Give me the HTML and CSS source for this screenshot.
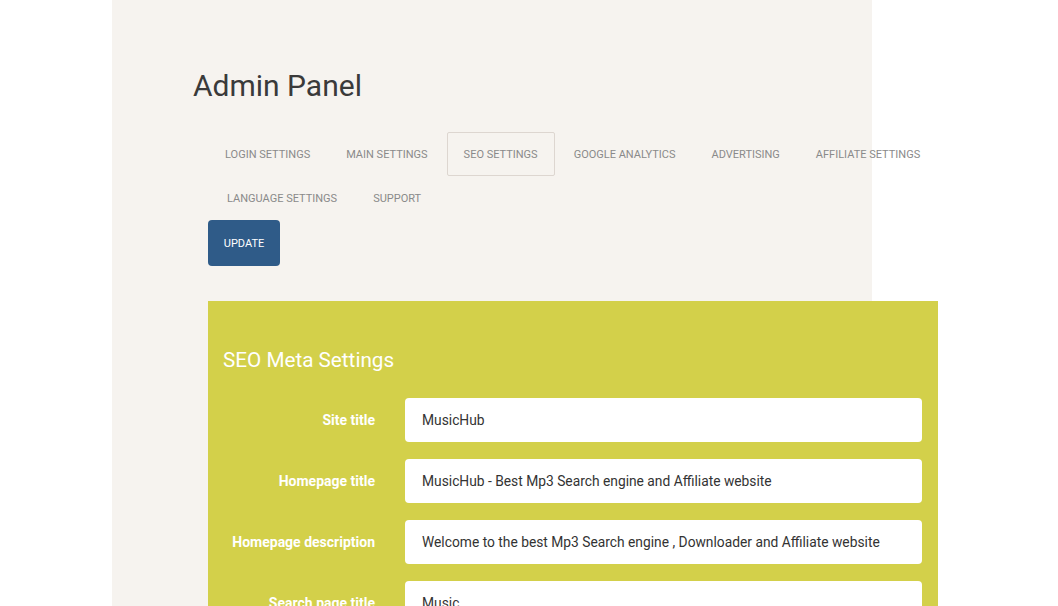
FILE: index.html
```html
<!DOCTYPE html>
<html>
<head>
<meta charset="utf-8">
<link rel="stylesheet" href="styles.css">
</head>
<body>
<div class="page">
  <div class="content">
    <h1 class="title">Admin Panel</h1>
    <ul class="tabs">
      <li class="tab">Login Settings</li>
      <li class="tab">Main Settings</li>
      <li class="tab active">SEO Settings</li>
      <li class="tab">Google Analytics</li>
      <li class="tab">Advertising</li>
      <li class="tab">Affiliate Settings</li>
      <li class="tab second">Language Settings</li>
      <li class="tab">Support</li>
    </ul>
    <button class="btn-update">Update</button>
    <div class="panel">
      <h3 class="panel-title">SEO Meta Settings</h3>
      <div class="form">
        <label class="label">Site title</label>
        <div class="input">MusicHub</div>
        <label class="label">Homepage title</label>
        <div class="input">MusicHub - Best Mp3 Search engine and Affiliate website</div>
        <label class="label">Homepage description</label>
        <div class="input">Welcome to the best Mp3 Search engine , Downloader and Affiliate website</div>
        <label class="label">Search page title</label>
        <div class="input">Music</div>
      </div>
    </div>
  </div>
</div>
</body>
</html>
```
FILE: styles.css
```css
html, body {
  margin: 0;
  padding: 0;
  background: #ffffff;
  font-family: Roboto, "Liberation Sans", sans-serif;
  overflow: hidden;
}
.page {
  margin-left: 112px;
  width: 760px;
  min-height: 606px;
  background: #f6f3ef;
  padding-left: 96px;
  box-sizing: border-box;
  padding-top: 1px;
}
.content {
  width: 730px;
}
.title {
  margin: 66px 0 0 -15px;
  font-size: 30px;
  font-weight: 400;
  color: #3a3a3a;
  line-height: 38px;
}
.tabs {
  list-style: none;
  margin: 27px 0 0 0;
  padding: 0;
  width: 745px;
  display: flex;
  flex-wrap: wrap;
}
.tab {
  height: 44px;
  box-sizing: border-box;
  padding: 0 16px;
  margin-right: 2px;
  display: flex;
  align-items: center;
  font-size: 11px;
  text-transform: uppercase;
  color: #8a8a8a;
  border: 1px solid transparent;
  border-radius: 2px;
}
.tab.active {
  border-color: #ddd6d0;
}
.tab.second {
  margin-left: 2px;
}
.btn-update {
  display: block;
  width: 72px;
  height: 46px;
  border: none;
  border-radius: 4px;
  background: #2f5b88;
  color: #ffffff;
  font-family: Roboto, "Liberation Sans", sans-serif;
  font-size: 11px;
  text-transform: uppercase;
  padding: 0;
}
.panel {
  margin-top: 35px;
  background: #d3d04a;
  padding: 44px 16px 20px 15px;
}
.panel-title {
  margin: 0 0 23px 0;
  font-size: 20.7px;
  font-weight: 400;
  color: #ffffff;
  line-height: 30px;
}
.form {
  display: grid;
  grid-template-columns: 152px 1fr;
  column-gap: 30px;
  row-gap: 17px;
}
.label {
  text-align: right;
  align-self: center;
  font-size: 14px;
  font-weight: 700;
  color: #ffffff;
}
.input {
  height: 44px;
  box-sizing: border-box;
  background: #ffffff;
  border-radius: 4px;
  padding: 0 16px 0 17px;
  display: flex;
  align-items: center;
  font-size: 13.8px;
  color: #333333;
}
```
